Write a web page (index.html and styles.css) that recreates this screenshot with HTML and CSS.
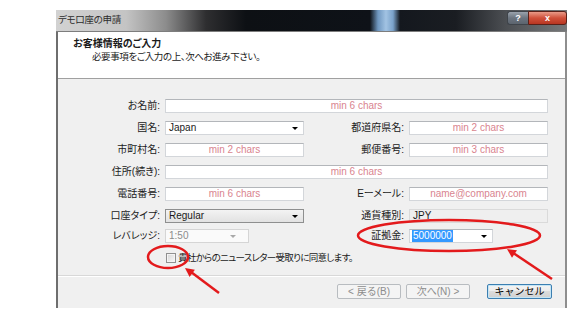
FILE: index.html
```html
<!DOCTYPE html>
<html lang="ja">
<head>
    <meta charset="UTF-8">
    <meta name="viewport" content="width=device-width, initial-scale=1.0">
    <link rel="stylesheet" href="styles.css">
</head>
<body>
    <div class="window">
        <div class="titlebar">
            <span class="title">デモ口座の申請</span>
            <div class="caption">
                <span class="cap-help">?</span>
                <span class="cap-close">x</span>
            </div>
        </div>
        <div class="frame">
            <div class="header">
                <div class="header-title">お客様情報のご入力</div>
                <div class="header-sub">必要事項をご入力の上、次へお進み下さい。</div>
            </div>
            <div class="content">
                <div class="form">
                    <div class="lbl">お名前:</div>
                    <div class="field wide hint">min 6 chars</div>

                    <div class="lbl">国名:</div>
                    <div class="field combo">Japan</div>
                    <div class="lbl">都道府県名:</div>
                    <div class="field hint">min 2 chars</div>

                    <div class="lbl">市町村名:</div>
                    <div class="field hint">min 2 chars</div>
                    <div class="lbl">郵便番号:</div>
                    <div class="field hint">min 3 chars</div>

                    <div class="lbl">住所(続き):</div>
                    <div class="field wide hint">min 6 chars</div>

                    <div class="lbl">電話番号:</div>
                    <div class="field hint">min 6 chars</div>
                    <div class="lbl">Eーメール:</div>
                    <div class="field hint">name@company.com</div>

                    <div class="lbl">口座タイプ:</div>
                    <div class="field combo list">Regular</div>
                    <div class="lbl">通貨種別:</div>
                    <div class="field readonly">JPY</div>

                    <div class="lbl">レバレッジ:</div>
                    <div class="field combo disabled short">1:50</div>
                    <div class="lbl">証拠金:</div>
                    <div class="field combo short"><span class="sel">5000000</span></div>
                </div>
                <div class="agree">
                    <span class="checkbox"></span>
                    <span class="agree-text">貴社からのニュースレター受取りに同意します。</span>
                </div>
            </div>
            <div class="footer">
                <button class="btn" disabled>&lt; 戻る(B)</button>
                <button class="btn" disabled>次へ(N) &gt;</button>
                <button class="btn cancel">キャンセル</button>
            </div>
        </div>
    </div>

    <svg class="marks" width="572" height="319" viewBox="0 0 572 319">
        <ellipse cx="168" cy="257" rx="20" ry="11" />
        <line x1="219" y1="293" x2="191" y2="272" />
        <polygon points="185,268 194.9,269.7 189.6,277" />
        <ellipse cx="449" cy="235.5" rx="91" ry="15.5" />
        <line x1="552" y1="279" x2="514" y2="253.5" />
        <polygon points="507,249 517,250.3 512,257.7" />
    </svg>
</body>
</html>
```

FILE: styles.css
```css
body {
    margin: 0;
    background: #fff;
    font-family: "Liberation Sans", "Noto Sans CJK JP", sans-serif;
    font-size: 10px;
    font-feature-settings: "palt";
    color: #1a1a1a;
}

.window {
    margin: 10px 0 0 56px;
    width: 511px;
    height: 298px;
    display: flex;
    flex-direction: column;
}

.titlebar {
    height: 22px;
    flex: none;
    display: flex;
    align-items: flex-start;
    background: linear-gradient(to right,
        #d2d2d2 0, #c4c4c4 70px, #8c8c8c 110px, #2e2e30 150px, #0d1014 190px,
        #0e1218 314px, #6f97c0 322px, #a2c3e3 330px, #7aa2ca 337px, #14181e 344px,
        #1a1d22 400px, #4c4f53 450px, #76787a 511px);
    border-bottom: 1px solid #7d7d7d;
    box-sizing: border-box;
}

.title {
    padding: 3px 0 0 2px;
    line-height: 14px;
    font-size: 9.5px;
    letter-spacing: -0.3px;
    color: #2c2c2c;
}

.caption {
    margin-left: auto;
    margin-top: 1px;
    display: flex;
    height: 14px;
    color: #fff;
    font-weight: bold;
    font-size: 9px;
    line-height: 13px;
    text-align: center;
}

.cap-help {
    width: 20px;
    border: 1px solid #3f444a;
    border-right: none;
    border-radius: 3px 0 0 3px;
    background: linear-gradient(#9aa2ac, #6c7580 50%, #5c646e);
}

.cap-close {
    width: 37px;
    border: 1px solid #5a2018;
    border-radius: 0 3px 3px 0;
    background: linear-gradient(#e99a88, #d0503a 50%, #b83622);
}

.frame {
    flex: 1;
    display: flex;
    flex-direction: column;
    border-left: 2px solid #6e6e6e;
    border-right: 2px solid #8e8e8e;
}

.header {
    height: 47px;
    flex: none;
    box-sizing: border-box;
    padding: 5px 0 0 15px;
    background: #fff;
    border-bottom: 1px solid #a0a0a0;
    line-height: 13px;
}

.header-title {
    font-weight: bold;
}

.header-sub {
    padding-left: 19px;
    font-size: 9.5px;
    letter-spacing: -0.4px;
}

.content {
    flex: 1;
    background: #f0f0f0;
}

.form {
    display: grid;
    grid-template-columns: 107px 139px 105px 139px;
    grid-template-rows: 22px 22px 22px 22px 22px 20px 23px;
    padding-top: 20px;
    align-items: start;
}

.lbl {
    text-align: right;
    padding-right: 5px;
    line-height: 14px;
    white-space: nowrap;
}

.field {
    position: relative;
    height: 14px;
    box-sizing: border-box;
    border: 1px solid #d3d6da;
    border-top-color: #b3b6ba;
    background: #fff;
    padding: 0 3px;
    line-height: 12px;
    white-space: nowrap;
    overflow: hidden;
}

.wide {
    grid-column: 2 / 5;
}

.hint {
    color: #d9848f;
    text-align: center;
}

.combo::after {
    content: "";
    position: absolute;
    right: 5px;
    top: 5px;
    border-left: 3px solid transparent;
    border-right: 3px solid transparent;
    border-top: 3px solid #000;
}

.combo.list {
    border-color: #8e8f8f;
    background: linear-gradient(#f3f3f3, #e2e2e2);
}

.combo.disabled {
    color: #8c8c8c;
    border-color: #d5d5d5;
    background: #fafafa;
}

.combo.disabled::after {
    right: 12px;
    border-top-color: #a8a8a8;
}

.short {
    width: 84px;
}

.readonly {
    background: #efefef;
    border-color: #dadada;
}

.sel {
    display: inline-block;
    margin-left: -1px;
    padding: 0 1px;
    background: #3399ff;
    color: #fff;
}

.agree {
    display: flex;
    align-items: center;
    gap: 2px;
    padding-left: 108px;
    line-height: 11px;
}

.agree-text {
    font-size: 9.5px;
    letter-spacing: -0.7px;
}

.checkbox {
    width: 10px;
    height: 10px;
    box-sizing: border-box;
    border: 1px solid #909090;
    background: linear-gradient(135deg, #d6d6d6, #f8f8f8);
    box-shadow: inset 0 0 0 1px #f4f4f4;
}

.footer {
    height: 33px;
    flex: none;
    box-sizing: border-box;
    display: flex;
    justify-content: flex-end;
    padding: 8px 13px 0 0;
    background: #f0f0f0;
    border-top: 1px solid #d8d8d8;
    box-shadow: inset 0 1px #fff;
}

.btn {
    width: 64px;
    height: 15px;
    padding: 0;
    font-family: inherit;
    font-size: 10px;
    line-height: 13px;
    border: 1px solid #b8bcc0;
    border-radius: 2px;
    background: #f4f4f4;
    color: #8d8d8d;
}

.btn + .btn {
    margin-left: 5px;
}

.btn.cancel {
    margin-left: 17px;
    width: 65px;
    color: #000;
    border-color: #3c7fb1;
    background: linear-gradient(#f4f4f4, #ebebeb 50%, #dcdcdc 50%, #d0d0d0);
    box-shadow: inset 0 0 0 1px #c4e5f6;
}

.marks {
    position: absolute;
    top: 0;
    left: 0;
    pointer-events: none;
}

.marks ellipse,
.marks line {
    fill: none;
    stroke: #e31a1c;
    stroke-width: 2.5;
}

.marks polygon {
    fill: #e31a1c;
}
```
